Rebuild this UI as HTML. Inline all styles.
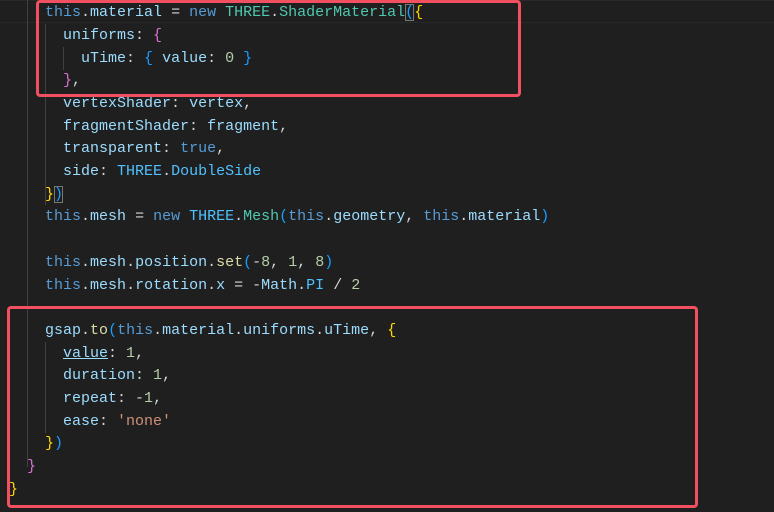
<!DOCTYPE html><html><head><meta charset="utf-8"><style>
html,body{margin:0;padding:0;background:#1f1f1f;width:774px;height:512px;overflow:hidden}
.l{position:absolute;left:9px;height:22.7px;line-height:22.7px;font-family:"Liberation Mono",monospace;font-size:15px;color:#d4d4d4;white-space:pre}
.k{color:#569cd6}.p{color:#9cdcfe}.c{color:#4ec9b0}.C{color:#4fc1ff}.f{color:#dcdcaa}.n{color:#b5cea8}.s{color:#ce9178}
.b1{color:#ffd700}.b2{color:#da70d6}.b3{color:#179fff}
.g{position:absolute;width:1px;background:#404040}
.box{position:absolute;border:3px solid #f0505f;border-radius:4px;box-sizing:border-box}
.bb{outline:1px solid #777;outline-offset:-1px}
#w{position:absolute;left:0;top:1.5px}
</style></head><body>
<div style="position:absolute;left:0;top:0;width:774px;height:23px;border-top:1px solid #282828;border-bottom:1px solid #282828;box-sizing:border-box"></div>
<div class="g" style="left:27px;top:0;height:467px"></div>
<div class="g" style="left:45px;top:24px;height:181px"></div>
<div class="g" style="left:63px;top:47px;height:23px"></div>
<div class="g" style="left:45px;top:342px;height:91px"></div>
<div id="w">
<div class="l" style="top:0.6px">    <span class="k">this</span>.<span class="p">material</span> = <span class="k">new</span> <span class="c">THREE</span>.<span class="c">ShaderMaterial</span><span class="b3 bb">(</span><span class="b1">{</span></div>
<div class="l" style="top:23.3px">      <span class="p">uniforms</span>: <span class="b2">{</span></div>
<div class="l" style="top:46px">        <span class="p">uTime</span>: <span class="b3">{</span> <span class="p">value</span>: <span class="n">0</span> <span class="b3">}</span></div>
<div class="l" style="top:68.7px">      <span class="b2">}</span>,</div>
<div class="l" style="top:91.4px">      <span class="p">vertexShader</span>: <span class="p">vertex</span>,</div>
<div class="l" style="top:114.1px">      <span class="p">fragmentShader</span>: <span class="p">fragment</span>,</div>
<div class="l" style="top:136.8px">      <span class="p">transparent</span>: <span class="k">true</span>,</div>
<div class="l" style="top:159.5px">      <span class="p">side</span>: <span class="C">THREE</span>.<span class="C">DoubleSide</span></div>
<div class="l" style="top:182.2px">    <span class="b1">}</span><span class="b3 bb">)</span></div>
<div class="l" style="top:204.9px">    <span class="k">this</span>.<span class="p">mesh</span> = <span class="k">new</span> <span class="C">THREE</span>.<span class="c">Mesh</span><span class="b3">(</span><span class="k">this</span>.<span class="p">geometry</span>, <span class="k">this</span>.<span class="p">material</span><span class="b3">)</span></div>
<div class="l" style="top:250.3px">    <span class="k">this</span>.<span class="p">mesh</span>.<span class="p">position</span>.<span class="f">set</span><span class="b3">(</span>-<span class="n">8</span>, <span class="n">1</span>, <span class="n">8</span><span class="b3">)</span></div>
<div class="l" style="top:273px">    <span class="k">this</span>.<span class="p">mesh</span>.<span class="p">rotation</span>.<span class="p">x</span> = -<span class="p">Math</span>.<span class="C">PI</span> / <span class="n">2</span></div>
<div class="l" style="top:318.4px">    <span class="p">gsap</span>.<span class="f">to</span><span class="b3">(</span><span class="k">this</span>.<span class="p">material</span>.<span class="p">uniforms</span>.<span class="p">uTime</span>, <span class="b1">{</span></div>
<div class="l" style="top:341.1px">      <span class="p" style="text-decoration:underline">value</span>: <span class="n">1</span>,</div>
<div class="l" style="top:363.8px">      <span class="p">duration</span>: <span class="n">1</span>,</div>
<div class="l" style="top:386.5px">      <span class="p">repeat</span>: -<span class="n">1</span>,</div>
<div class="l" style="top:409.2px">      <span class="p">ease</span>: <span class="s">'none'</span></div>
<div class="l" style="top:431.9px">    <span class="b1">}</span><span class="b3">)</span></div>
<div class="l" style="top:454.6px">  <span class="b2">}</span></div>
<div class="l" style="top:477.3px"><span class="b1">}</span></div>
</div>
<div class="box" style="left:36px;top:0px;width:485px;height:97px"></div>
<div class="box" style="left:7px;top:306px;width:691px;height:202px"></div>
</body></html>
